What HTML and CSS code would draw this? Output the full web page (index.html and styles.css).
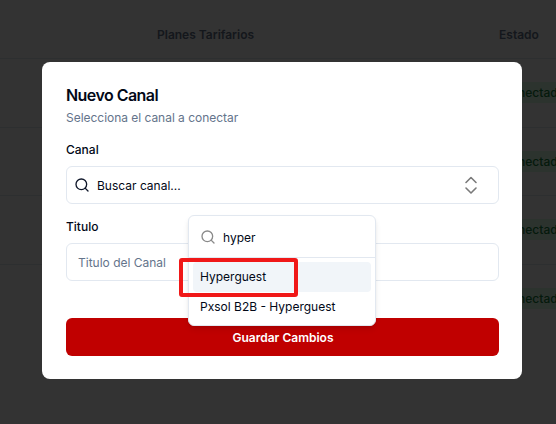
FILE: index.html
```html
<!DOCTYPE html>
<html lang="es">
<head>
<meta charset="utf-8">
<title>Nuevo Canal</title>
<link rel="stylesheet" href="styles.css">
</head>
<body>
<div class="page">
  <div class="table-head">
    <span class="th th-plans">Planes Tarifarios</span>
    <span class="th th-state">Estado</span>
  </div>
  <div class="row"><span class="badge">Conectado</span></div>
  <div class="row"><span class="badge">Conectado</span></div>
  <div class="row"><span class="badge">Conectado</span></div>
  <div class="row last"><span class="badge">Conectado</span></div>
</div>
<div class="overlay"></div>
<div class="modal">
  <h2 class="title">Nuevo Canal</h2>
  <p class="subtitle">Selecciona el canal a conectar</p>
  <label class="label label-canal">Canal</label>
  <div class="field select">
    <svg class="icon-search" viewBox="0 0 24 24" width="16" height="16" fill="none" stroke="#0f172a" stroke-width="2" stroke-linecap="round" stroke-linejoin="round"><circle cx="11" cy="11" r="8"/><path d="m21 21-4.3-4.3"/></svg>
    <span class="select-text">Buscar canal...</span>
    <svg class="icon-chevrons" viewBox="0 0 24 24" width="24" height="24" fill="none" stroke="#7a7a7a" stroke-width="1.6" stroke-linecap="round" stroke-linejoin="round"><path d="m7 9.5 5-5 5 5"/><path d="m7 15 5 5 5-5"/></svg>
  </div>
  <label class="label label-title">Titulo</label>
  <div class="field input"><span class="placeholder">Titulo del Canal</span></div>
  <button class="save">Guardar Cambios</button>
  <div class="popover">
    <div class="pop-search">
      <svg viewBox="0 0 24 24" width="16" height="16" fill="none" stroke="#8a8a8a" stroke-width="2" stroke-linecap="round" stroke-linejoin="round"><circle cx="11" cy="11" r="8"/><path d="m21 21-4.3-4.3"/></svg>
      <span class="pop-query">hyper</span>
    </div>
    <div class="pop-list">
      <div class="option active">Hyperguest</div>
      <div class="option">Pxsol B2B - Hyperguest</div>
    </div>
  </div>
  <div class="highlight"></div>
</div>
</body>
</html>
```
FILE: styles.css
```css
* { box-sizing: border-box; }
html, body { margin: 0; padding: 0; height: 100%; overflow: hidden; }
body { font-family: Inter, "Liberation Sans", sans-serif; background: #fff; color: #0f172a; }

.page { width: 100%; }
.table-head { height: 59px; border-bottom: 1px solid #e2e8f0; display: flex; align-items: center; position: relative; padding-top: 11px; }
.th { font-size: 12px; font-weight: 600; color: #64748b; line-height: 16px; }
.th-plans { margin-left: 157px; }
.th-state { margin-left: 245px; }
.row { height: 68.5px; border-bottom: 1px solid #e2e8f0; display: flex; align-items: center; padding-left: 492px; white-space: nowrap; overflow: hidden; }
.row.last { border-bottom: none; }
.badge { display: inline-block; font-size: 12px; font-weight: 500; line-height: 21px; padding: 0 10px; background: #dcfce7; color: #15803d; border-radius: 4px; }

.overlay { position: fixed; inset: 0; background: rgba(0, 0, 0, 0.8); }

.modal { position: fixed; left: 42px; top: 62px; width: 480px; height: 317px; background: #fff; border-radius: 8px; padding: 23px 24px 24px; }
.title { margin: 0; font-size: 16px; font-weight: 600; line-height: 20px; letter-spacing: -0.55px; color: #020817; }
.subtitle { margin: 4px 0 0; font-size: 12px; line-height: 17px; letter-spacing: -0.03px; color: #64748b; }
.label { display: block; font-size: 12px; font-weight: 500; line-height: 14px; color: #020817; }
.label-canal { margin-top: 17px; }
.label-title { margin-top: 16px; }
.field { height: 38px; width: 433px; border: 1px solid #e2e8f0; border-radius: 6px; display: flex; align-items: center; font-size: 12px; }
.select { margin-top: 9px; padding: 0 12px 0 7px; }
.select-text { margin-left: 7px; color: #020817; }
.icon-chevrons { margin-left: auto; margin-right: 3px; }
.icon-search { flex: none; }
.input { margin-top: 9px; padding: 0 11px; }
.placeholder { color: #64748b; }
.save { display: block; margin-top: 37px; width: 433px; height: 38px; border: 0; border-radius: 6px; background: #c00000; color: #fff; font: 600 12px Inter, "Liberation Sans", sans-serif; padding-right: 5px; }

.popover { position: absolute; left: 146px; top: 153px; width: 188px; height: 111px; background: #fff; border: 1px solid #e2e8f0; border-radius: 6px; box-shadow: 0 4px 6px -1px rgba(0,0,0,.1), 0 2px 4px -2px rgba(0,0,0,.1); }
.pop-search { height: 42px; border-bottom: 1px solid #e2e8f0; display: flex; align-items: center; padding-left: 11px; }
.pop-query { margin-left: 7px; padding-top: 2px; font-size: 12px; color: #020817; }
.pop-list { padding: 4px; }
.option { height: 30px; line-height: 30px; padding: 0 7px; font-size: 12px; color: #020817; border-radius: 4px; }
.option.active { background: #f1f5f9; }
.highlight { position: absolute; left: 137px; top: 196px; width: 119px; height: 39px; border: 4px solid #f01818; border-radius: 3px; }
```
